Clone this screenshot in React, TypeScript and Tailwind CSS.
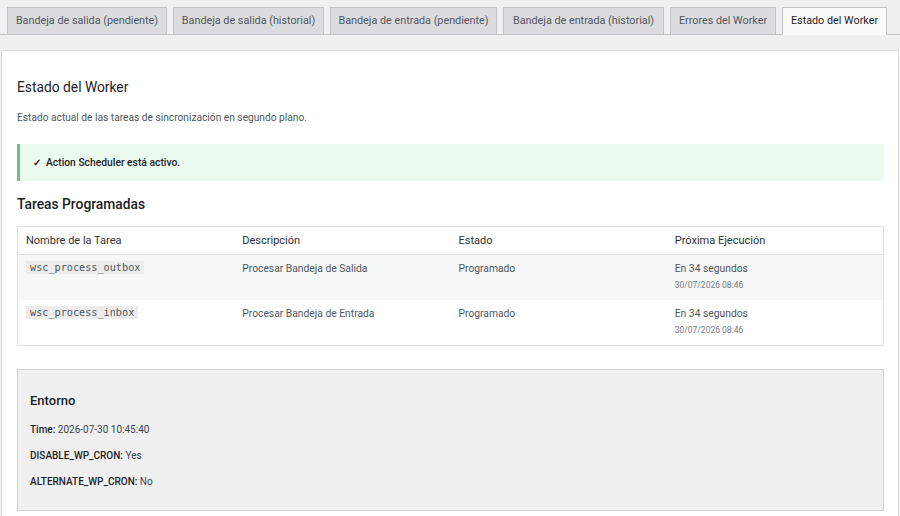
import React from 'react';

const tabs = [
  { label: 'Bandeja de salida (pendiente)', w: 'w-[160px]' },
  { label: 'Bandeja de salida (historial)', w: 'w-[151px]' },
  { label: 'Bandeja de entrada (pendiente)', w: 'w-[167px]' },
  { label: 'Bandeja de entrada (historial)', w: 'w-[161px]' },
  { label: 'Errores del Worker', w: 'w-[106px]' },
  { label: 'Estado del Worker', w: 'w-[105px]' },
];

const tasks = [
  { name: 'wsc_process_outbox', desc: 'Procesar Bandeja de Salida', status: 'Programado', next: 'En 34 segundos', date: '30/07/2026 08:46' },
  { name: 'wsc_process_inbox', desc: 'Procesar Bandeja de Entrada', status: 'Programado', next: 'En 34 segundos', date: '30/07/2026 08:46' },
];

export default function App() {
  return (
    <div className="w-[900px] h-[516px] overflow-hidden bg-[#f0f0f1] text-[#1d2327]" style={{ fontFamily: 'Roboto, "Liberation Sans", sans-serif' }}>
      <div className="flex items-end gap-[6px] pl-[7px] pt-[7px] border-b border-[#c3c4c7] h-[35px]">
        {tabs.map((t, i) => {
          const active = i === tabs.length - 1;
          return (
            <div
              key={t.label}
              className={`${t.w} shrink-0 h-[28px] -mb-px flex items-center justify-center whitespace-nowrap text-[10.8px] border border-[#c3c4c7] ${active ? 'bg-[#fafafa] text-[#1d2327] border-b-[#fafafa]' : 'bg-[#dcdcde] text-[#50575e]'}`}
            >
              {t.label}
            </div>
          );
        })}
      </div>

      <div className="mt-[15px] ml-px w-[898px] bg-white border border-[#dcdcde] pl-[15px] pr-[14px] pt-[27px] pb-[20px]">
        <h2 className="text-[13.8px] leading-[18px] text-[#1d2327]">Estado del Worker</h2>
        <p className="mt-[14px] text-[10.2px] text-[#50575e]">Estado actual de las tareas de sincronización en segundo plano.</p>

        <div className="mt-[19px] h-[37px] flex items-center bg-[#edfaef] border-l-[3px] border-[#68c47a] pl-[13px] text-[10.3px] font-medium">
          <span className="mr-[5px] font-bold">✓</span>Action Scheduler está activo.
        </div>

        <h3 className="mt-[14px] text-[13.8px] font-medium leading-[18px]">Tareas Programadas</h3>

        <div className="mt-[13px] border border-[#e0e0e2]">
          <div className="grid grid-cols-4 h-[28px] items-center border-b border-[#e0e0e2] text-[11px] text-[#2c3338]">
            <div className="pl-[8px]">Nombre de la Tarea</div>
            <div className="pl-[8px]">Descripción</div>
            <div className="pl-[8px]">Estado</div>
            <div className="pl-[8px]">Próxima Ejecución</div>
          </div>
          {tasks.map((t, i) => (
            <div key={t.name} className={`grid grid-cols-4 h-[45px] pt-[5px] text-[10.3px] text-[#50575e] ${i === 0 ? 'bg-[#f6f7f7]' : 'bg-white'}`}>
              <div className="pl-[8px]">
                <code className="bg-[#ececec] px-[4px] py-[1px] text-[10.2px] text-[#50575e]" style={{ fontFamily: '"DejaVu Sans Mono", monospace' }}>{t.name}</code>
              </div>
              <div className="pl-[8px] pt-[1px]">{t.desc}</div>
              <div className="pl-[8px] pt-[1px]">{t.status}</div>
              <div className="pl-[8px] pt-[1px]">
                <div>{t.next}</div>
                <div className="mt-[2px] text-[8.5px] text-[#787c82]">{t.date}</div>
              </div>
            </div>
          ))}
        </div>

        <div className="mt-[23px] h-[142px] bg-[#f0f0f0] border border-[#d0d0d0] px-[12px] pt-[22px]">
          <h3 className="text-[13px] font-medium leading-[18px]">Entorno</h3>
          <div className="mt-[12px] flex flex-col gap-[11px] text-[10px] text-[#3c434a]">
            <div><span className="font-medium text-[#1d2327]">Time:</span> 2026-07-30 10:45:40</div>
            <div><span className="font-medium text-[#1d2327]">DISABLE_WP_CRON:</span> Yes</div>
            <div><span className="font-medium text-[#1d2327]">ALTERNATE_WP_CRON:</span> No</div>
          </div>
        </div>
      </div>
    </div>
  );
}
